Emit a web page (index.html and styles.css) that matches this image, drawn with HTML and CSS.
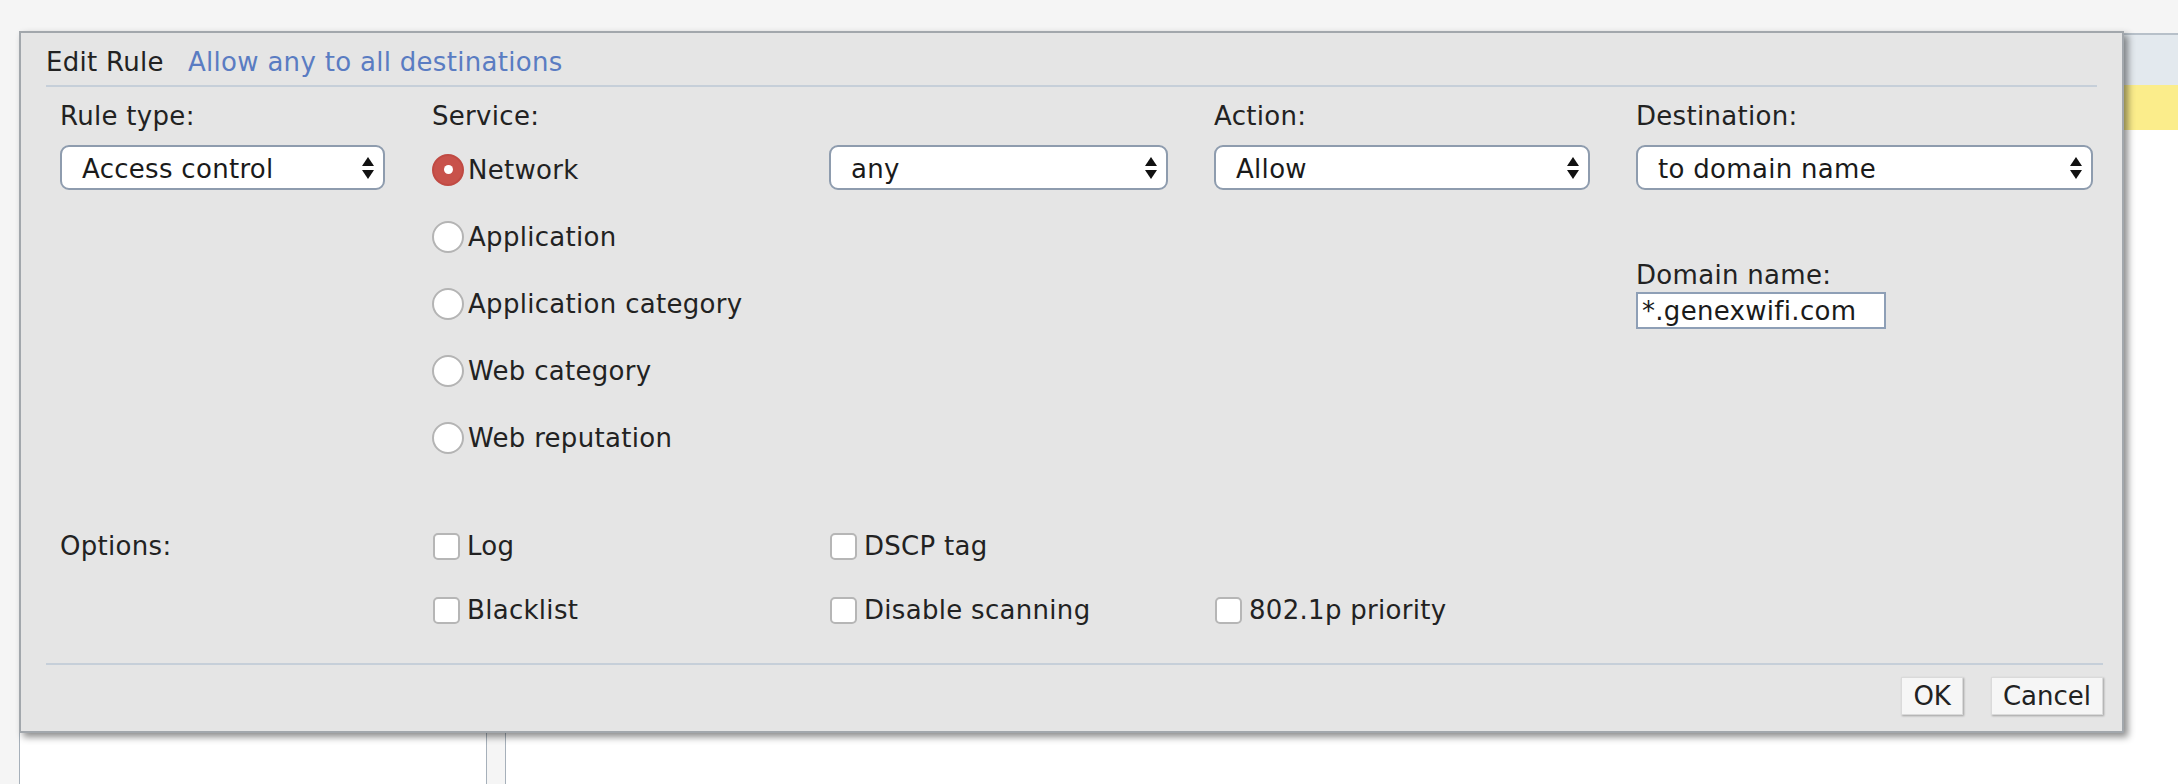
FILE: index.html
```html
<!DOCTYPE html>
<html>
<head>
<meta charset="utf-8">
<link rel="stylesheet" href="styles.css">
</head>
<body>
<div class="layout">
  <div class="sidebar"></div>
  <div class="main">
    <div class="thead"></div>
    <div class="hilite"></div>
  </div>
</div>

<div class="dialog">
  <div class="dlg-head">
    <span class="dlg-title">Edit Rule</span>
    <span class="dlg-sub">Allow any to all destinations</span>
  </div>

  <div class="form">
    <div class="top">
      <div class="col c1">
        <div class="lbl">Rule type:</div>
        <div class="sel w1"><span class="sel-text">Access control</span><svg class="arr" width="12" height="22" viewBox="0 0 12 22"><polygon points="0,9 6,0 12,9"/><polygon points="0,13 12,13 6,22"/></svg></div>
      </div>
      <div class="col c2">
        <div class="lbl">Service:</div>
        <div class="radios">
          <div class="radio-row"><span class="radio on"></span><span>Network</span></div>
          <div class="radio-row"><span class="radio"></span><span>Application</span></div>
          <div class="radio-row"><span class="radio"></span><span>Application category</span></div>
          <div class="radio-row"><span class="radio"></span><span>Web category</span></div>
          <div class="radio-row"><span class="radio"></span><span>Web reputation</span></div>
        </div>
      </div>
      <div class="col c3">
        <div class="lbl">&nbsp;</div>
        <div class="sel w3"><span class="sel-text">any</span><svg class="arr" width="12" height="22" viewBox="0 0 12 22"><polygon points="0,9 6,0 12,9"/><polygon points="0,13 12,13 6,22"/></svg></div>
      </div>
      <div class="col c4">
        <div class="lbl">Action:</div>
        <div class="sel w4"><span class="sel-text">Allow</span><svg class="arr" width="12" height="22" viewBox="0 0 12 22"><polygon points="0,9 6,0 12,9"/><polygon points="0,13 12,13 6,22"/></svg></div>
      </div>
      <div class="col c5">
        <div class="lbl">Destination:</div>
        <div class="sel w5"><span class="sel-text">to domain name</span><svg class="arr" width="12" height="22" viewBox="0 0 12 22"><polygon points="0,9 6,0 12,9"/><polygon points="0,13 12,13 6,22"/></svg></div>
        <div class="lbl domain-lbl">Domain name:</div>
        <div class="text-input">*.genexwifi.com</div>
      </div>
    </div>

    <div class="options">
      <div class="col c1">
        <div class="opt-row">Options:</div>
      </div>
      <div class="col c2">
        <div class="opt-row"><span class="cb"></span><span>Log</span></div>
        <div class="opt-row"><span class="cb"></span><span>Blacklist</span></div>
      </div>
      <div class="col c3">
        <div class="opt-row"><span class="cb"></span><span>DSCP tag</span></div>
        <div class="opt-row"><span class="cb"></span><span>Disable scanning</span></div>
      </div>
      <div class="col c4">
        <div class="opt-row"></div>
        <div class="opt-row"><span class="cb"></span><span>802.1p priority</span></div>
      </div>
    </div>
  </div>

  <div class="dlg-foot">
    <button class="btn">OK</button>
    <button class="btn">Cancel</button>
  </div>
</div>
</body>
</html>
```

FILE: styles.css
```css
html, body {
  margin: 0;
  padding: 0;
  height: 100%;
  overflow: hidden;
}
body {
  background: #f5f5f5;
  font-family: "DejaVu Sans", Verdana, sans-serif;
  font-size: 26px;
  letter-spacing: 0.3px;
  color: #222;
}

/* background page */
.layout {
  display: flex;
  gap: 18px;
  padding: 33px 0 0 19px;
  height: 100%;
  box-sizing: border-box;
}
.sidebar {
  width: 466px;
  background: #fff;
  border-left: 1px solid #a6b0ba;
  border-right: 1px solid #a6b0ba;
}
.main {
  flex: 1;
  background: #fff;
  border-left: 1px solid #a6b0ba;
}
.thead {
  height: 50px;
  background: #e3e9ee;
  border-top: 2px solid #b7c0c9;
}
.hilite {
  height: 45px;
  background: #fbed8b;
}

/* dialog */
.dialog {
  position: absolute;
  top: 31px;
  left: 19px;
  width: 2105px;
  height: 702px;
  box-sizing: border-box;
  background: #e5e5e5;
  border: 2px solid #a2a7ac;
  box-shadow: 4px 4px 7px rgba(0, 0, 0, 0.45);
}
.dlg-head {
  margin: 0 25px;
  padding: 14px 0 8px;
  line-height: 30px;
  border-bottom: 2px solid #c6cfd9;
  display: flex;
}
.dlg-title {
  color: #222;
}
.dlg-sub {
  color: #5a7cc2;
  margin-left: 24px;
}

.form {
  margin: 14px 0 0 39px;
}
.top, .options {
  display: flex;
}
.col {
  display: flex;
  flex-direction: column;
  flex: none;
}
.c1 { width: 372px; }
.c2 { width: 397px; }
.c3 { width: 385px; }
.c4 { width: 422px; }
.c5 { width: 457px; }

.lbl {
  line-height: 30px;
  height: 30px;
  white-space: nowrap;
}

.sel {
  margin-top: 14px;
  height: 45px;
  box-sizing: border-box;
  background: #fff;
  border: 2px solid #8e9cae;
  border-radius: 9px;
  display: flex;
  align-items: center;
  justify-content: space-between;
  padding: 0 9px 0 20px;
  color: #1a1a1a;
  white-space: nowrap;
}
.sel-text {
  padding-top: 2px;
}
.arr polygon { fill: #111; }
.w1 { width: 325px; }
.w3 { width: 339px; }
.w4 { width: 376px; }
.w5 { width: 457px; }

.domain-lbl {
  margin-top: 70px;
}
.text-input {
  margin-top: 2px;
  width: 250px;
  height: 37px;
  box-sizing: border-box;
  background: #fff;
  border: 2px solid #8e9fb6;
  padding: 0 4px;
  line-height: 34px;
  color: #1a1a1a;
  white-space: nowrap;
}

.radios {
  margin-top: 16px;
  display: flex;
  flex-direction: column;
  gap: 22px;
}
.radio-row {
  height: 45px;
  display: flex;
  align-items: center;
  gap: 4px;
  white-space: nowrap;
}
.radio {
  width: 32px;
  height: 32px;
  box-sizing: border-box;
  border-radius: 50%;
  background: #fff;
  border: 2px solid #b4b4b4;
  flex: none;
  display: flex;
  align-items: center;
  justify-content: center;
}
.radio.on {
  background: #c8524b;
  border-color: #c04a43;
}
.radio.on::after {
  content: "";
  width: 9px;
  height: 9px;
  border-radius: 50%;
  background: #fff;
}

.options {
  margin-top: 71px;
}
.options .col {
  gap: 34px;
}
.opt-row {
  height: 30px;
  line-height: 30px;
  display: flex;
  align-items: center;
  gap: 7px;
  white-space: nowrap;
}
.cb {
  width: 27px;
  height: 27px;
  box-sizing: border-box;
  margin-left: 1px;
  background: #fff;
  border: 2px solid #b6b6b6;
  border-radius: 5px;
  flex: none;
}

.dlg-foot {
  margin: 38px 19px 0 25px;
  border-top: 2px solid #c6cfd9;
  padding-top: 12px;
  display: flex;
  justify-content: flex-end;
  gap: 28px;
}
.btn {
  height: 38px;
  box-sizing: border-box;
  padding: 0 11px;
  font-family: "DejaVu Sans", Verdana, sans-serif;
  font-size: 26px;
  letter-spacing: 0;
  color: #222;
  background: #f6f6f6;
  border: 1px solid #dadada;
  border-radius: 0;
  box-shadow: 1px 1px 2px rgba(0, 0, 0, 0.3);
  line-height: 34px;
}
```
